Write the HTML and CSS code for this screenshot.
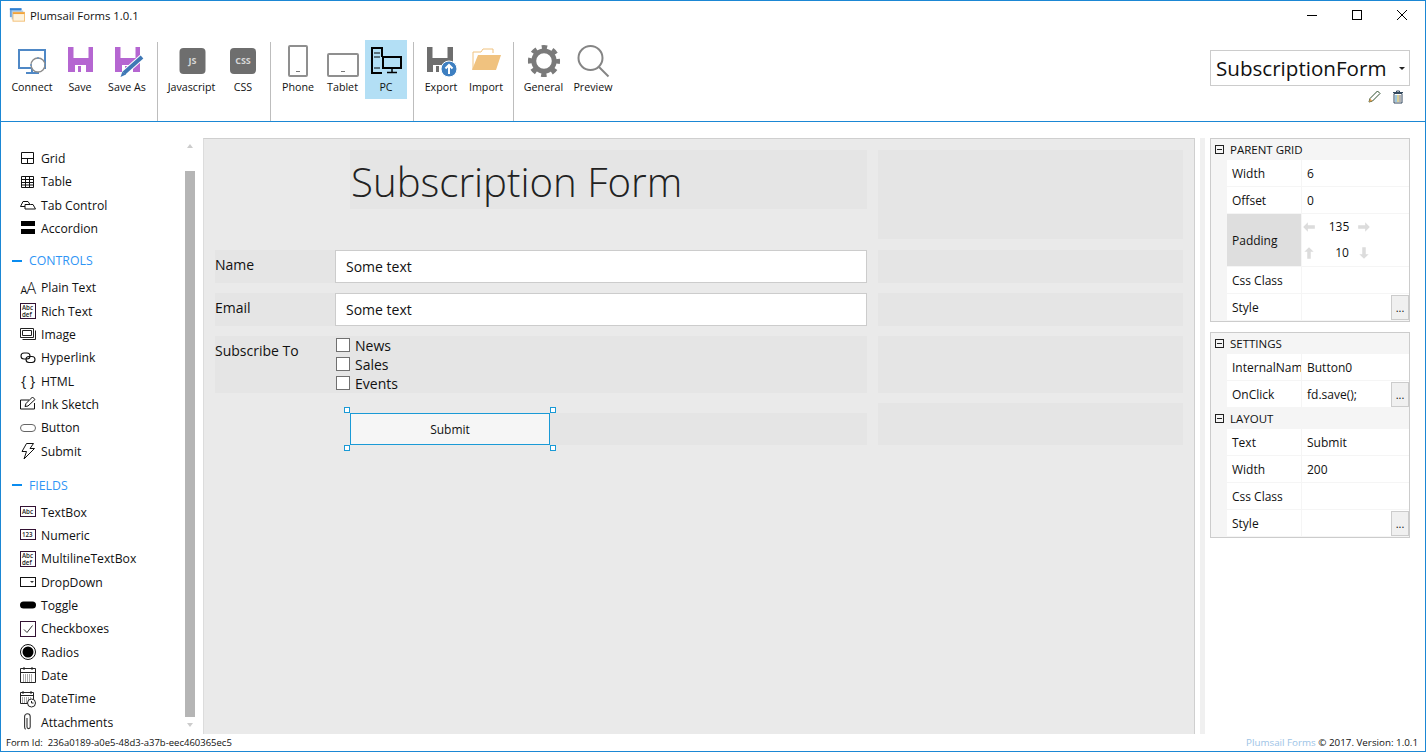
FILE: index.html
```html
<!DOCTYPE html>
<html lang="en">
<head>
    <meta charset="UTF-8">
    <meta name="viewport" content="width=device-width, initial-scale=1.0">
    <title>Plumsail Forms 1.0.1</title>
    <link rel="stylesheet" href="styles.css">
</head>
<body>
    <div class="window">
        <div class="titlebar">
            <svg class="app-icon" width="16" height="15" viewBox="0 0 18 16">
                <rect x="1" y="1" width="13" height="10" fill="#6aa5e0"/>
                <rect x="1" y="1" width="13" height="2" fill="#2f7fd0"/>
                <rect x="3" y="3.500" width="13" height="10" fill="#a9cdf0"/>
                <rect x="4.500" y="5.500" width="13" height="10" fill="#fdf3df" stroke="#f2bd70"/>
                <rect x="4.500" y="5.500" width="13" height="2" fill="#f2a33a"/>
            </svg>
            <span class="app-name">Plumsail Forms 1.0.1</span>
            <div class="win-buttons">
                <svg width="12" height="12" viewBox="0 0 12 12"><path d="M1 6.500h10" stroke="#000"/></svg>
                <svg width="12" height="12" viewBox="0 0 12 12"><rect x="1.500" y="1.500" width="9" height="9" fill="none" stroke="#000"/></svg>
                <svg width="12" height="12" viewBox="0 0 12 12"><path d="M1 1l10 10M11 1L1 11" stroke="#000"/></svg>
            </div>
        </div>

        <div class="toolbar">
            <div class="tool w48">
                <svg width="36" height="36" viewBox="0 0 36 36">
                    <rect x="5" y="6" width="26" height="18" fill="none" stroke="#4f88c6" stroke-width="2"/>
                    <path d="M18 24v4M12 29h13" stroke="#4f88c6" stroke-width="2"/>
                    <circle cx="24" cy="21" r="7" fill="#fff" stroke="#8d8d8d" stroke-width="1.400"/>
                    <path d="M16 21h2M30 21h2M24 13v2" stroke="#4f88c6"/>
                </svg>
                <span>Connect</span>
            </div>
            <div class="tool w48">
                <svg width="36" height="36" viewBox="0 0 36 36">
                    <path d="M6 3h25v25H6z" fill="#b566d1"/>
                    <path d="M11.500 3h15v11h-15zM13 21h11v7H13z" fill="#fff"/>
                    <path d="M16 22h3v6h-3z" fill="#b566d1"/>
                </svg>
                <span>Save</span>
            </div>
            <div class="tool w46">
                <svg width="36" height="36" viewBox="0 0 36 36">
                    <path d="M6 3h25v25H6z" fill="#b566d1"/>
                    <path d="M11.500 3h15v11h-15zM13 21h11v7H13z" fill="#fff"/>
                    <path d="M16 22h3v6h-3z" fill="#b566d1"/>
                    <path d="M15 29L33 13" stroke="#fff" stroke-width="6"/>
                    <path d="M15 29L33 13" stroke="#3f78b5" stroke-width="4"/>
                    <path d="M11.500 33l2-5.500 3.500 3z" fill="#3f78b5"/>
                </svg>
                <span>Save As</span>
            </div>
            <div class="sep sep-first"></div>

            <div class="tool w59">
                <svg width="36" height="36" viewBox="0 0 36 36">
                    <rect x="5.500" y="4" width="26" height="26" rx="4" fill="#6e6e6e"/>
                    <text class="badge-text" x="18.500" y="20" text-anchor="middle">JS</text>
                </svg>
                <span>Javascript</span>
            </div>
            <div class="tool w44">
                <svg width="36" height="36" viewBox="0 0 36 36">
                    <rect x="5" y="4" width="26" height="26" rx="4" fill="#6e6e6e"/>
                    <text class="badge-text" x="18" y="20" text-anchor="middle">CSS</text>
                </svg>
                <span>CSS</span>
            </div>
            <div class="sep sep-second"></div>

            <div class="tool w44">
                <svg width="36" height="36" viewBox="0 0 36 36">
                    <rect x="9" y="2" width="18" height="30" rx="1" fill="#fff" stroke="#8f8f8f" stroke-width="2"/>
                    <path d="M16 27.500h4" stroke="#777"/>
                </svg>
                <span>Phone</span>
            </div>
            <div class="tool w45">
                <svg width="36" height="36" viewBox="0 0 36 36">
                    <rect x="3" y="10" width="30" height="22" rx="1" fill="#fff" stroke="#8f8f8f" stroke-width="2"/>
                    <path d="M16 27.500h4" stroke="#777"/>
                </svg>
                <span>Tablet</span>
            </div>
            <div class="tool w42 tool-on">
                <svg width="36" height="36" viewBox="0 0 36 36">
                    <path d="M14 29H4V4h10v9" fill="none" stroke="#000" stroke-width="2"/>
                    <path d="M6 9h6M6 13h6M6 24h6" stroke="#000"/>
                    <rect x="15" y="13" width="18" height="11" fill="none" stroke="#000" stroke-width="2"/>
                    <path d="M24 24v4M19 28.500h10" stroke="#000" stroke-width="1.500"/>
                </svg>
                <span>PC</span>
            </div>
            <div class="sep sep-third"></div>

            <div class="tool w44">
                <svg width="36" height="36" viewBox="0 0 36 36">
                    <path d="M4 3h26v25H4z" fill="#6e6e6e"/>
                    <path d="M9.500 3h15v11h-15zM10 21h11v7H10z" fill="#fff"/>
                    <path d="M13 22h3v6h-3z" fill="#6e6e6e"/>
                    <circle cx="26" cy="25" r="8" fill="#3d7fc1" stroke="#fff"/>
                    <path d="M26 30v-9M22.500 24.500l3.500-3.500 3.500 3.500" fill="none" stroke="#fff" stroke-width="2"/>
                </svg>
                <span>Export</span>
            </div>
            <div class="tool w46">
                <svg width="36" height="36" viewBox="0 0 36 36">
                    <path d="M5 25V8h8l2-3h10v4" fill="none" stroke="#f0c27f"/>
                    <path d="M10 11h23l-5 15H4z" fill="#f0c27f"/>
                </svg>
                <span>Import</span>
            </div>
            <div class="sep sep-fourth"></div>

            <div class="tool w49">
                <svg width="36" height="36" viewBox="0 0 37 36">
                    <circle cx="18.500" cy="17" r="10.500" fill="none" stroke="#7a7a7a" stroke-width="5"/>
                    <circle cx="18.500" cy="17" r="14" fill="none" stroke="#7a7a7a" stroke-width="5" stroke-dasharray="5.500 5.500" stroke-dashoffset="2.750"/>
                </svg>
                <span>General</span>
            </div>
            <div class="tool w50">
                <svg width="36" height="36" viewBox="0 0 36 36">
                    <circle cx="15.500" cy="14" r="12" fill="none" stroke="#858585" stroke-width="2"/>
                    <path d="M24 23l9.500 9.500" stroke="#858585" stroke-width="2"/>
                </svg>
                <span>Preview</span>
            </div>

            <div class="form-picker">
                <div class="combo">
                    <span>SubscriptionForm</span>
                    <svg width="6" height="3" viewBox="0 0 8 4"><path d="M0 0h8L4 4z" fill="#222"/></svg>
                </div>
                <div class="combo-actions">
                    <svg width="14" height="14" viewBox="0 0 14 14">
                        <path d="M2 12l1-3.500L10.500 1 13 3.500 5.500 11z" fill="#fff" stroke="#2f4f2f"/>
                        <path d="M2 12l1-3.500L5.500 11z" fill="#e3a050"/>
                    </svg>
                    <svg width="12" height="14" viewBox="0 0 12 14">
                        <path d="M2 3.500h8V13H2z" fill="#fff" stroke="#34495e"/>
                        <path d="M1 2.500h10M4.500 2V1h3v1" fill="none" stroke="#34495e"/>
                        <path d="M4 5v7" stroke="#3a8fc0"/>
                        <path d="M6 5v7" stroke="#b5a030"/>
                        <path d="M8 5v7" stroke="#6a6a6a"/>
                    </svg>
                </div>
            </div>
        </div>

        <div class="main">
            <div class="palette">
                <div class="palette-list">
                    <div class="item">
                        <svg width="18" height="18" viewBox="0 0 18 18">
                            <path d="M2.500 3.500h12v11h-12zM2.500 9.500h12M8.500 9.500v5" fill="none" stroke="#111"/>
                        </svg>
                        Grid
                    </div>
                    <div class="item">
                        <svg width="18" height="18" viewBox="0 0 18 18">
                            <path d="M2.500 3.500h12v11h-12zM2.500 6.500h12M2.500 9.500h12M2.500 12h12M6.500 3.500v11M10.500 3.500v11" fill="none" stroke="#111"/>
                        </svg>
                        Table
                    </div>
                    <div class="item">
                        <svg width="18" height="18" viewBox="0 0 18 18">
                            <path d="M6 10.500H1.500L4 5.500h5l2 3M6 8.500h5.500h2.500l2.500 4.500H6z" fill="none" stroke="#111"/>
                        </svg>
                        Tab Control
                    </div>
                    <div class="item">
                        <svg width="18" height="18" viewBox="0 0 18 18">
                            <path d="M2 2h14v5H2zM2 10h14v5H2z" fill="#000"/>
                        </svg>
                        Accordion
                    </div>

                    <div class="heading heading-controls"><span class="dash"></span>CONTROLS</div>
                    <div class="item">
                        <svg width="18" height="18" viewBox="0 0 18 18">
                            <text class="glyph-a glyph-small" x="1.500" y="15">A</text>
                            <text class="glyph-a" x="7.500" y="15">A</text>
                        </svg>
                        Plain Text
                    </div>
                    <div class="item">
                        <svg width="18" height="18" viewBox="0 0 18 18">
                            <rect x="1.500" y="1.500" width="15" height="15" fill="#fff" stroke="#331133"/>
                            <text class="glyph-mini" x="3" y="8">Abc</text>
                            <text class="glyph-mini" x="3" y="14.500">def</text>
                        </svg>
                        Rich Text
                    </div>
                    <div class="item">
                        <svg width="18" height="18" viewBox="0 0 18 18">
                            <path d="M1.500 3.500h13v9h-13z" fill="none" stroke="#222" stroke-width="1"/>
                            <path d="M3.500 5.500h9v5h-9z" fill="none" stroke="#222"/>
                            <path d="M3.500 14.500h13v-9" fill="none" stroke="#222"/>
                        </svg>
                        Image
                    </div>
                    <div class="item">
                        <svg width="18" height="18" viewBox="0 0 18 18">
                            <rect x="2" y="4" width="9" height="6" rx="3" fill="none" stroke="#111" stroke-width="1.100"/>
                            <rect x="7" y="7.500" width="9" height="6" rx="3" fill="none" stroke="#111" stroke-width="1.100"/>
                        </svg>
                        Hyperlink
                    </div>
                    <div class="item">
                        <svg width="18" height="18" viewBox="0 0 18 18">
                            <text class="glyph-brace" x="2" y="13.500">{</text>
                            <text class="glyph-brace" x="11" y="13.500">}</text>
                        </svg>
                        HTML
                    </div>
                    <div class="item">
                        <svg width="18" height="18" viewBox="0 0 18 18">
                            <path d="M10 5H1.500v9h14V8" fill="none" stroke="#111"/>
                            <path d="M6 11.500l1-3L13.500 2 16 4.500 9 11z" fill="#fff" stroke="#111"/>
                        </svg>
                        Ink Sketch
                    </div>
                    <div class="item">
                        <svg width="18" height="18" viewBox="0 0 18 18">
                            <rect x="1.500" y="5.500" width="15" height="7" rx="3.500" fill="none" stroke="#666"/>
                        </svg>
                        Button
                    </div>
                    <div class="item">
                        <svg width="18" height="18" viewBox="0 0 18 18">
                            <path d="M7.500 1.500h7L11 6.500h4.500L5 17l2.500-7.500H3z" fill="#fff" stroke="#111"/>
                        </svg>
                        Submit
                    </div>

                    <div class="heading heading-fields"><span class="dash"></span>FIELDS</div>
                    <div class="item">
                        <svg width="18" height="18" viewBox="0 0 18 18">
                            <rect x="1.500" y="3.500" width="15" height="10" fill="#fff" stroke="#331133"/>
                            <text class="glyph-mini" x="3" y="11">Abc</text>
                        </svg>
                        TextBox
                    </div>
                    <div class="item">
                        <svg width="18" height="18" viewBox="0 0 18 18">
                            <rect x="1.500" y="3.500" width="15" height="10" fill="#fff" stroke="#331133"/>
                            <text class="glyph-mini" x="3" y="11">123</text>
                        </svg>
                        Numeric
                    </div>
                    <div class="item">
                        <svg width="18" height="18" viewBox="0 0 18 18">
                            <rect x="1.500" y="1.500" width="15" height="15" fill="#fff" stroke="#331133"/>
                            <text class="glyph-mini" x="3" y="8">Abc</text>
                            <text class="glyph-mini" x="3" y="14.500">def</text>
                        </svg>
                        MultilineTextBox
                    </div>
                    <div class="item">
                        <svg width="18" height="18" viewBox="0 0 18 18">
                            <rect x="1.500" y="4.500" width="15" height="9" fill="#fff" stroke="#111"/>
                            <path d="M11 8h4l-2 2z" fill="#333"/>
                        </svg>
                        DropDown
                    </div>
                    <div class="item">
                        <svg width="18" height="18" viewBox="0 0 18 18">
                            <rect x="1" y="5.500" width="16" height="7" rx="3.500" fill="#000"/>
                        </svg>
                        Toggle
                    </div>
                    <div class="item">
                        <svg width="18" height="18" viewBox="0 0 18 18">
                            <rect x="1.500" y="1.500" width="15" height="15" fill="none" stroke="#331133"/>
                            <path d="M5 9.500l3 3 5.500-7" fill="none" stroke="#333"/>
                        </svg>
                        Checkboxes
                    </div>
                    <div class="item">
                        <svg width="18" height="18" viewBox="0 0 18 18">
                            <circle cx="9" cy="9" r="7.500" fill="none" stroke="#111"/>
                            <circle cx="9" cy="9" r="5.500" fill="#000"/>
                        </svg>
                        Radios
                    </div>
                    <div class="item">
                        <svg width="18" height="18" viewBox="0 0 18 18">
                            <path d="M1.500 2.500h15v14h-15zM1.500 6.500h15M5 1v3M13 1v3" fill="none" stroke="#222"/>
                            <path d="M4 9h10M4 11h10M4 13h10M4 15h10" stroke="#555" stroke-dasharray="1 1"/>
                        </svg>
                        Date
                    </div>
                    <div class="item">
                        <svg width="18" height="18" viewBox="0 0 18 18">
                            <path d="M1.500 2.500h13v11h-13zM1.500 5.500h13M4 1v3M12 1v3" fill="none" stroke="#222"/>
                            <path d="M3 8h10M3 10h10M3 12h10" stroke="#555" stroke-dasharray="1 1"/>
                            <circle cx="12.500" cy="13" r="4" fill="#fff" stroke="#222"/>
                            <path d="M12.500 11v2h2" fill="none" stroke="#222"/>
                        </svg>
                        DateTime
                    </div>
                    <div class="item">
                        <svg width="18" height="18" viewBox="0 0 18 18">
                            <path d="M8 5v9a1.600 1.600 0 0 0 3.200 0V3.500a2.800 2.800 0 0 0-5.600 0V14a3.200 3.200 0 0 0 1 2.300" fill="none" stroke="#333" stroke-width="1.100"/>
                        </svg>
                        Attachments
                    </div>
                </div>
                <div class="scrollbar">
                    <span class="scroll-arrow up"></span>
                    <div class="scroll-thumb"></div>
                    <span class="scroll-arrow down"></span>
                </div>
            </div>

            <div class="canvas">
                <div class="form-row title-row">
                    <div class="title-cell"><h1>Subscription Form</h1></div>
                    <div class="cell"></div>
                </div>
                <div class="form-row field-row">
                    <div class="field">
                        <div class="field-label">Name</div>
                        <div class="field-input">Some text</div>
                    </div>
                    <div class="cell"></div>
                </div>
                <div class="form-row field-row">
                    <div class="field">
                        <div class="field-label">Email</div>
                        <div class="field-input">Some text</div>
                    </div>
                    <div class="cell"></div>
                </div>
                <div class="form-row check-row">
                    <div class="field">
                        <div class="field-label">Subscribe To</div>
                        <div class="checks">
                            <div class="check"><span class="box"></span>News</div>
                            <div class="check"><span class="box"></span>Sales</div>
                            <div class="check"><span class="box"></span>Events</div>
                        </div>
                    </div>
                    <div class="cell"></div>
                </div>
                <div class="form-row button-row">
                    <div class="button-cell">
                        <div class="submit-wrap">
                            <div class="submit">Submit</div>
                            <span class="handle tl"></span>
                            <span class="handle tr"></span>
                            <span class="handle bl"></span>
                            <span class="handle br"></span>
                        </div>
                    </div>
                    <div class="cell"></div>
                </div>
            </div>

            <div class="side-track"></div>

            <div class="props">
                <div class="prop-card">
                    <div class="prop-head"><span class="minus"></span>PARENT GRID</div>
                    <div class="prop"><div class="prop-name">Width</div><div class="prop-value">6</div></div>
                    <div class="prop"><div class="prop-name">Offset</div><div class="prop-value">0</div></div>
                    <div class="prop prop-padding">
                        <div class="prop-name">Padding</div>
                        <div class="padding-value">
                            <div class="padding-line">
                                <svg width="14" height="14" viewBox="0 0 12 12"><path d="M1 6l4-4v2.500h6v3H5V10z" fill="#dcdcdc"/></svg>
                                <span>135</span>
                                <svg width="14" height="14" viewBox="0 0 12 12"><path d="M11 6L7 2v2.500H1v3h6V10z" fill="#dcdcdc"/></svg>
                            </div>
                            <div class="padding-line">
                                <svg width="14" height="14" viewBox="0 0 12 12"><path d="M6 1l4 4H7.500v6h-3V5H2z" fill="#dcdcdc"/></svg>
                                <span class="padding-ten">10</span>
                                <svg width="14" height="14" viewBox="0 0 12 12"><path d="M6 11l4-4H7.500V1h-3v6H2z" fill="#dcdcdc"/></svg>
                            </div>
                        </div>
                    </div>
                    <div class="prop"><div class="prop-name">Css Class</div><div class="prop-value"></div></div>
                    <div class="prop"><div class="prop-name">Style</div><div class="prop-value"></div><div class="more">...</div></div>
                </div>

                <div class="prop-card">
                    <div class="prop-head"><span class="minus"></span>SETTINGS</div>
                    <div class="prop"><div class="prop-name">InternalName</div><div class="prop-value">Button0</div></div>
                    <div class="prop"><div class="prop-name">OnClick</div><div class="prop-value">fd.save();</div><div class="more">...</div></div>
                    <div class="prop-head"><span class="minus"></span>LAYOUT</div>
                    <div class="prop"><div class="prop-name">Text</div><div class="prop-value">Submit</div></div>
                    <div class="prop"><div class="prop-name">Width</div><div class="prop-value">200</div></div>
                    <div class="prop"><div class="prop-name">Css Class</div><div class="prop-value"></div></div>
                    <div class="prop"><div class="prop-name">Style</div><div class="prop-value"></div><div class="more">...</div></div>
                </div>
            </div>
        </div>

        <div class="statusbar">
            <span>Form Id:&nbsp; 236a0189-a0e5-48d3-a37b-eec460365ec5</span>
            <span class="status-right"><span class="brand">Plumsail Forms</span> &copy; 2017. Version: 1.0.1</span>
        </div>
    </div>
</body>
</html>
```

FILE: styles.css
```css
* {
    box-sizing: border-box;
}
html, body {
    margin: 0;
    padding: 0;
    height: 100%;
    overflow: hidden;
}
body {
    font-family: "Open Sans", "Noto Sans", sans-serif;
    font-size: 12px;
    color: #111;
    background: #fff;
}
svg {
    display: block;
    flex: none;
    overflow: visible;
}
.window {
    width: 1426px;
    height: 752px;
    border: 1px solid #1b87d4;
    display: flex;
    flex-direction: column;
}

.titlebar {
    height: 29px;
    display: flex;
    align-items: center;
    padding-left: 8px;
    flex: none;
}
.app-icon {
    margin-right: 5px;
    margin-top: -2px;
}
.app-name {
    font-size: 11.300px;
    margin-top: -1px;
}
.win-buttons {
    margin-left: auto;
    display: flex;
    gap: 33px;
    padding-right: 17px;
    margin-top: -2px;
}

.toolbar {
    height: 92px;
    flex: none;
    display: flex;
    align-items: flex-start;
    padding: 10px 15px 0 7px;
    border-bottom: 1px solid #1b87d4;
}
.tool {
    height: 59px;
    padding-top: 4px;
    display: flex;
    flex-direction: column;
    align-items: center;
    font-size: 10.700px;
    line-height: 14px;
    white-space: nowrap;
}
.tool-on {
    background: #b3dff5;
}
.w42 { width: 42px; }
.w44 { width: 44px; }
.w45 { width: 45px; }
.w46 { width: 46px; }
.w48 { width: 48px; }
.w49 { width: 49px; }
.w50 { width: 50px; }
.w59 { width: 59px; }
.sep {
    width: 1px;
    height: 79px;
    margin-top: 2px;
    background: #bdbdbd;
}
.sep-first { margin: 2px 4px 0 7px; }
.sep-second { margin: 2px 5px 0 5px; }
.sep-third { margin: 2px 5px 0 6px; }
.sep-fourth { margin: 2px 5px 0 4px; }
.badge-text {
    font-family: "Open Sans", sans-serif;
    font-size: 9px;
    font-weight: 700;
    fill: #d8d8d8;
}

.form-picker {
    margin-left: auto;
    width: 200px;
    padding-top: 10px;
}
.combo {
    height: 36px;
    border: 1px solid #ccc;
    display: flex;
    align-items: center;
    justify-content: space-between;
    padding: 0 4px 0 5px;
    font-size: 20.600px;
    color: #111;
}
.combo-actions {
    display: flex;
    justify-content: flex-end;
    align-items: center;
    gap: 11px;
    padding: 4px 6px 0 0;
}

.main {
    flex: 1;
    display: flex;
    min-height: 0;
}
.palette {
    width: 202px;
    flex: none;
    display: flex;
    padding-right: 8px;
}
.palette-list {
    flex: 1;
    padding: 24.700px 0 0 18px;
    font-size: 12.200px;
}
.item {
    height: 23.330px;
    display: flex;
    align-items: center;
    gap: 4px;
    white-space: nowrap;
}
.heading {
    height: 23.330px;
    display: flex;
    align-items: center;
    margin-left: -7px;
    color: #2f95f5;
    font-size: 12.300px;
}
.heading-controls {
    margin-top: 9px;
    margin-bottom: 3.730px;
}
.heading-fields {
    margin-top: 10.740px;
    margin-bottom: 3.670px;
}
.dash {
    width: 10px;
    height: 2px;
    background: #0a8cf0;
    margin: 0 7px 0 0;
}
.glyph-a {
    font-family: "Open Sans", sans-serif;
    font-size: 16px;
    font-weight: 300;
    fill: #111;
}
.glyph-small {
    font-size: 10.500px;
    font-weight: 400;
}
.glyph-mini {
    font-family: "Open Sans", sans-serif;
    font-size: 6.200px;
    font-weight: 600;
    fill: #222;
}
.glyph-brace {
    font-family: "Open Sans", sans-serif;
    font-size: 14px;
    fill: #111;
}
.scrollbar {
    width: 10px;
    flex: none;
    display: flex;
    flex-direction: column;
    align-items: center;
    padding-top: 22px;
}
.scroll-arrow {
    width: 0;
    height: 0;
    border-left: 3.500px solid transparent;
    border-right: 3.500px solid transparent;
}
.scroll-arrow.up {
    border-bottom: 4px solid #ccc;
    margin-bottom: 23px;
}
.scroll-arrow.down {
    border-top: 4px solid #ccc;
    margin-top: 6px;
}
.scroll-thumb {
    width: 10px;
    height: 546px;
    background: #b5b5b5;
}

.canvas {
    width: 992px;
    height: 596px;
    margin-top: 16px;
    flex: none;
    background: #eaeaea;
    border-top: 1px solid #cfcfcf;
    border-left: 1px solid #dcdcdc;
    border-right: 1px solid #cfcfcf;
    padding: 11px 11px 0 11px;
    display: flex;
    flex-direction: column;
    gap: 11px;
}
.form-row {
    display: grid;
    grid-template-columns: 652px 305px;
    column-gap: 11px;
}
.cell {
    background: #e5e5e5;
}
.title-row { height: 89px; }
.field-row { height: 32px; }
.check-row { height: 56px; }
.button-row { height: 42px; }
.title-cell {
    margin-left: 135px;
    height: 59px;
    background: #e5e5e5;
}
h1 {
    margin: 0;
    font-size: 40.200px;
    font-weight: 300;
    line-height: 64px;
    padding-left: 1px;
    color: #222;
    white-space: nowrap;
}
.field {
    display: flex;
    background: #e5e5e5;
    font-size: 14px;
}
.field-label {
    width: 120px;
    flex: none;
    line-height: 30px;
}
.field-input {
    flex: 1;
    background: #fff;
    border: 1px solid #ccc;
    padding-left: 10px;
    line-height: 31px;
}
.checks {
    padding: 0 0 0 1px;
    line-height: 19px;
}
.check {
    display: flex;
    align-items: center;
    height: 19px;
}
.box {
    width: 14px;
    height: 14px;
    border: 1px solid #707070;
    background: #fff;
    margin-right: 5px;
    margin-top: -1px;
}
.button-cell {
    margin-top: 10px;
    margin-left: 135px;
    height: 32px;
    background: #e5e5e5;
}
.submit-wrap {
    position: relative;
    width: 200px;
    height: 32px;
}
.submit {
    height: 32px;
    border: 1px solid #1a9ad6;
    background: #f6f6f6;
    text-align: center;
    line-height: 31px;
    font-size: 12px;
}
.handle {
    position: absolute;
    width: 6px;
    height: 6px;
    border: 1px solid #1a9ad6;
    background: #fff;
}
.tl { left: -6px; top: -6px; }
.tr { right: -6px; top: -6px; }
.bl { left: -6px; bottom: -6px; }
.br { right: -6px; bottom: -6px; }

.side-track {
    width: 5px;
    height: 596px;
    margin: 16px 0 0 5px;
    background: #f0f0f0;
    flex: none;
}
.props {
    width: 200px;
    margin: 16px 0 0 5px;
    flex: none;
    display: flex;
    flex-direction: column;
    gap: 10px;
}
.prop-card {
    border: 1px solid #ccc;
    background: #f5f5f5;
    font-size: 12px;
}
.prop-head {
    height: 21px;
    display: flex;
    align-items: center;
    padding-left: 4px;
    font-size: 11.500px;
    background: #f5f5f5;
}
.minus {
    width: 9px;
    height: 9px;
    border: 1px solid #222;
    margin-right: 6px;
    background: linear-gradient(#222, #222) center / 5px 1px no-repeat;
}
.prop {
    position: relative;
    display: flex;
    height: 27px;
    margin-left: 16px;
    background: #fff;
    border-bottom: 1px solid #f5f5f5;
}
.prop-name {
    width: 75px;
    flex: none;
    padding-left: 5px;
    line-height: 28px;
    overflow: hidden;
    white-space: nowrap;
    border-right: 1px solid #f5f5f5;
}
.prop-value {
    flex: 1;
    padding-left: 5px;
    line-height: 28px;
}
.more {
    position: absolute;
    right: 0;
    top: 1px;
    width: 18px;
    height: 25px;
    background: #f0f0f0;
    border: 1px solid #ccc;
    text-align: center;
    font-size: 11px;
    line-height: 23px;
}
.prop-padding {
    height: 53px;
}
.prop-padding .prop-name {
    background: #dedede;
    line-height: 53px;
}
.padding-value {
    flex: 1;
}
.padding-line {
    height: 26px;
    display: flex;
    align-items: center;
    justify-content: space-between;
    padding-right: 38px;
}
.padding-line span {
    flex: 1;
    text-align: center;
    padding-left: 5px;
    margin-top: -2px;
}
.padding-line .padding-ten {
    padding-left: 11px;
}

.statusbar {
    flex: none;
    margin-top: auto;
    height: 17px;
    display: flex;
    justify-content: space-between;
    align-items: center;
    padding: 0 7px 0 5px;
    font-size: 9.500px;
    white-space: nowrap;
}
.status-right {
    font-size: 9.800px;
}
.brand {
    color: #9cc3e6;
}
```
